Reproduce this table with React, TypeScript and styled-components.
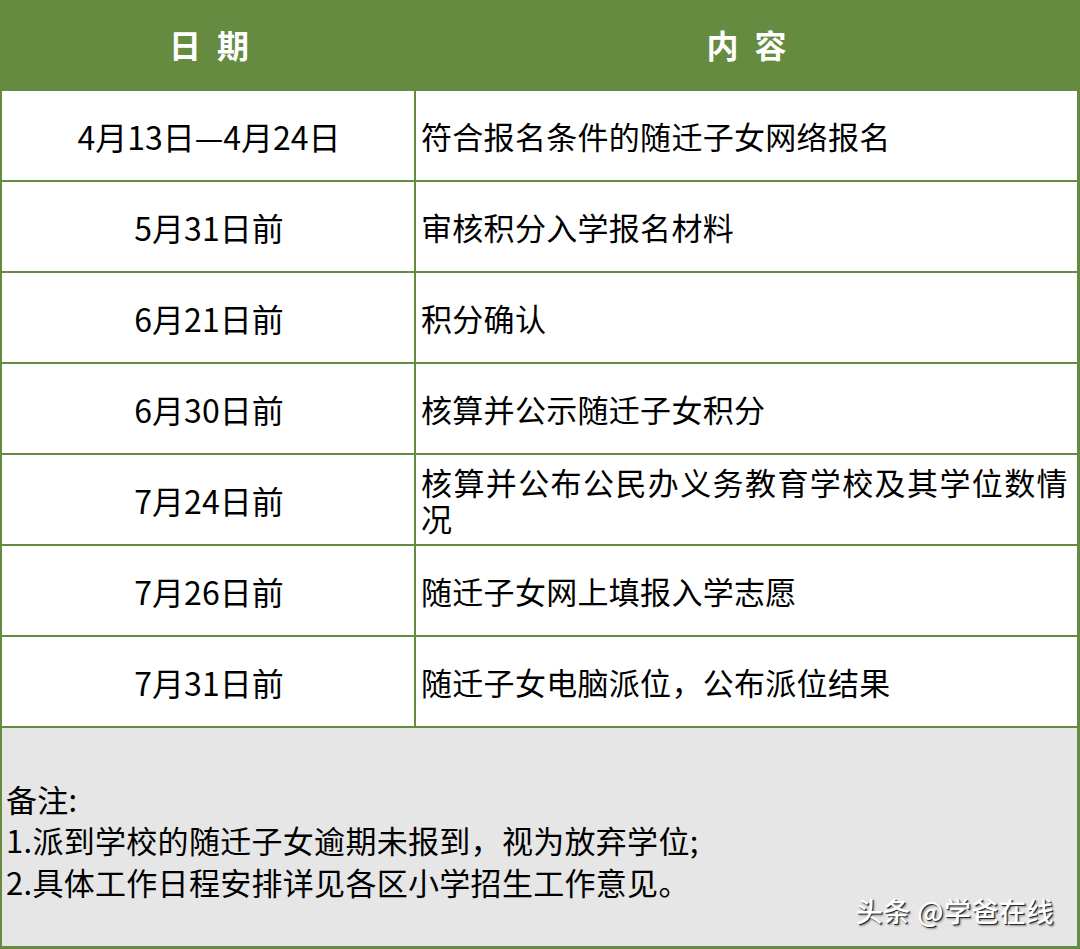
import styled, { createGlobalStyle } from 'styled-components'

const GREEN = '#658b41'

const GlobalStyle = createGlobalStyle`
  html, body {
    margin: 0;
    padding: 0;
    background: #ffffff;
  }
  body {
    font-family: "Noto Sans CJK SC", "Noto Sans", sans-serif;
    color: #000000;
  }
`

const Sheet = styled.div`
  width: 1080px;
  height: 949px;
  box-sizing: border-box;
  border-left: 2px solid ${GREEN};
  border-right: 3px solid ${GREEN};
  border-bottom: 3px solid ${GREEN};
  display: flex;
  flex-direction: column;
`

const HeaderRow = styled.div`
  display: grid;
  grid-template-columns: 414px 1fr;
  height: 91px;
  background: ${GREEN};
  border-bottom: 2px solid ${GREEN};
  box-sizing: border-box;
`

const HeaderCell = styled.div`
  display: flex;
  align-items: center;
  justify-content: center;
  color: #ffffff;
  font-size: 32px;
  font-weight: 700;
  letter-spacing: 16px;
  padding-left: 16px;
  padding-bottom: 2px;
`

const Row = styled.div`
  display: grid;
  grid-template-columns: 414px 1fr;
  height: 91px;
  box-sizing: border-box;
  border-bottom: 2px solid ${GREEN};
  background: #ffffff;
`

const DateCell = styled.div`
  display: flex;
  align-items: center;
  justify-content: center;
  border-right: 2px solid ${GREEN};
  font-size: 32px;
  line-height: 38px;
  padding-left: 2px;
`

const ContentCell = styled.div<{ $wide?: boolean }>`
  display: flex;
  align-items: center;
  padding: 0 4px 0 5px;
  font-size: 31px;
  line-height: 36px;
  letter-spacing: ${(p) => (p.$wide ? '1.4px' : '0.3px')};
`

const NoteArea = styled.div`
  position: relative;
  flex: 1;
  background: #e6e6e6;
  display: flex;
  flex-direction: column;
  justify-content: center;
  padding: 6px 0 0 4px;
`

const NoteLine = styled.div`
  font-size: 31px;
  line-height: 41.5px;
  letter-spacing: 0.3px;
`

const Watermark = styled.div`
  position: absolute;
  right: 23px;
  bottom: 16px;
  font-size: 27px;
  font-weight: 500;
  color: #ffffff;
  letter-spacing: 0.5px;
  text-shadow: 1px 1px 0 #2a2a2a, 2px 2px 2px rgba(0, 0, 0, 0.4);
`

const rows: { date: string; content: string; wide?: boolean }[] = [
  { date: '4月13日—4月24日', content: '符合报名条件的随迁子女网络报名' },
  { date: '5月31日前', content: '审核积分入学报名材料' },
  { date: '6月21日前', content: '积分确认' },
  { date: '6月30日前', content: '核算并公示随迁子女积分' },
  {
    date: '7月24日前',
    content: '核算并公布公民办义务教育学校及其学位数情况',
    wide: true,
  },
  { date: '7月26日前', content: '随迁子女网上填报入学志愿' },
  { date: '7月31日前', content: '随迁子女电脑派位，公布派位结果' },
]

export default function App() {
  return (
    <>
      <GlobalStyle />
      <Sheet>
        <HeaderRow>
          <HeaderCell>日期</HeaderCell>
          <HeaderCell>内容</HeaderCell>
        </HeaderRow>
        {rows.map((r) => (
          <Row key={r.date}>
            <DateCell>{r.date}</DateCell>
            <ContentCell $wide={r.wide}>{r.content}</ContentCell>
          </Row>
        ))}
        <NoteArea>
          <NoteLine>备注:</NoteLine>
          <NoteLine>1.派到学校的随迁子女逾期未报到，视为放弃学位;</NoteLine>
          <NoteLine>2.具体工作日程安排详见各区小学招生工作意见。</NoteLine>
          <Watermark>头条 @学爸在线</Watermark>
        </NoteArea>
      </Sheet>
    </>
  )
}
